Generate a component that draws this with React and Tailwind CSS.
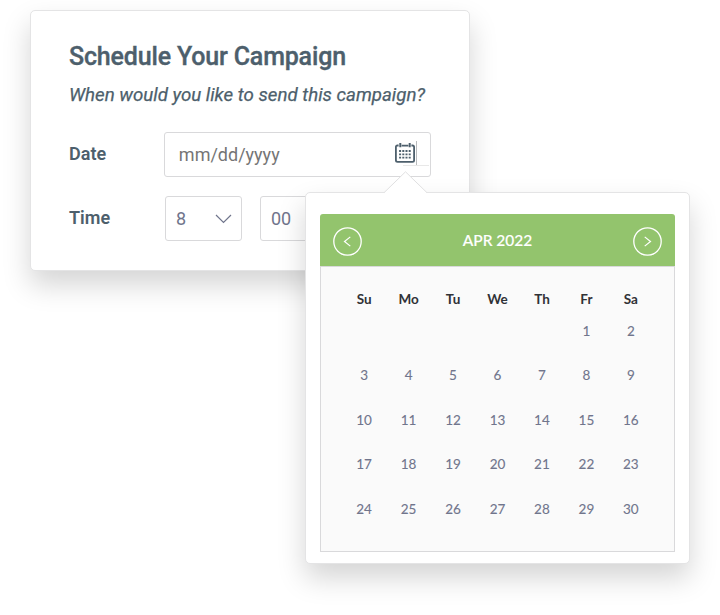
import React, { useMemo, useState } from "react";

const WEEKDAYS = ["Su", "Mo", "Tu", "We", "Th", "Fr", "Sa"];
const MONTHS = ["JAN", "FEB", "MAR", "APR", "MAY", "JUN", "JUL", "AUG", "SEP", "OCT", "NOV", "DEC"];

const pad = (n) => String(n).padStart(2, "0");

const CalendarIcon = () => (
  <svg width="20" height="20" viewBox="0 0 20 20" fill="none">
    <path
      d="M3.6 2.5H2.4Q.9 2.5 .9 4V17.3Q.9 18.9 2.5 18.9H17.5Q19.1 18.9 19.1 17.3V4Q19.1 2.5 17.6 2.5H16.4M6.6 2.7H13.4"
      stroke="#4d5f6c"
      strokeWidth="1.8"
    />
    <path d="M5.3 0V4.2M14.7 0V4.2" stroke="#4d5f6c" strokeWidth="2" />
    <path
      d="M4.1 8H16M4.1 11.3H16M4.1 14.6H16"
      stroke="#4d5f6c"
      strokeWidth="1.8"
      strokeDasharray="2 1.2"
    />
  </svg>
);

const NavButton = ({ label, onClick, d }) => (
  <button type="button" aria-label={label} onClick={onClick} className="mt-0.5 h-[29px] w-[29px]">
    <svg width="29" height="29" viewBox="0 0 29 29" fill="none" stroke="white">
      <circle cx="14.5" cy="14.5" r="13.7" strokeWidth="1.3" />
      <path d={d} strokeWidth="1.2" />
    </svg>
  </button>
);

const TimeField = ({ value }) => (
  <div className="flex h-[45px] w-[77.5px] items-center justify-between rounded-[3px] border border-[#d9d9db] pr-[9px] pl-[10.5px] text-lg text-[#70758c]">
    <span>{value}</span>
    <svg width="17" height="10" viewBox="0 0 17 10" fill="none" stroke="#70758c" strokeWidth="1.2">
      <path d="M1 1L8.5 8.5L16 1" />
    </svg>
  </div>
);

const DatePicker = ({ onPick }) => {
  const [view, setView] = useState({ year: 2022, month: 3 });

  const cells = useMemo(() => {
    const first = new Date(view.year, view.month, 1).getDay();
    const count = new Date(view.year, view.month + 1, 0).getDate();
    return [...Array(first).fill(null), ...Array.from({ length: count }, (_, i) => i + 1)];
  }, [view]);

  const move = (step) => {
    const d = new Date(view.year, view.month + step, 1);
    setView({ year: d.getFullYear(), month: d.getMonth() });
  };

  return (
    <div className="absolute top-[192px] left-[305px] h-[372px] w-[385px] rounded-[5px] border border-[#e4e4e5] bg-white px-[14.4px] pt-[21px] font-[Lato,sans-serif] shadow-[0_14px_28px_rgba(0,0,0,0.17)]">
      <svg className="absolute -top-[22px] left-[77px]" width="46" height="23" viewBox="0 0 46 23">
        <path d="M1 22L22.5 .8L44 22V23H1Z" fill="white" />
        <path d="M1 21.7L22.5 .8L44 21.7" fill="none" stroke="#e0e0e1" />
      </svg>

      <div className="flex h-[52px] items-center justify-between rounded-t-[3px] bg-[#93c46d] px-[12.8px]">
        <NavButton label="Previous month" onClick={() => move(-1)} d="M17.3 9.9L11.5 14.5L17.3 19.1" />
        <div className="pt-0.5 text-[15.5px] font-medium text-white [-webkit-text-stroke:0.15px_white]">
          {MONTHS[view.month]} {view.year}
        </div>
        <NavButton label="Next month" onClick={() => move(1)} d="M11.7 9.9L17.5 14.5L11.7 19.1" />
      </div>

      <div className="h-[286px] border border-[#d9d9db] bg-[#fafafa] px-[20.5px] pt-[21.5px]">
        <div className="grid grid-cols-7 text-center text-[13.5px] leading-5 font-bold text-[#303236]">
          {WEEKDAYS.map((d) => (
            <div key={d}>{d}</div>
          ))}
        </div>
        <div className="mt-[0.3px] grid auto-rows-[44.5px] grid-cols-7 text-center text-[13.5px] text-[#70758c] [-webkit-text-stroke:0.1px_#70758c]">
          {cells.map((day, i) =>
            day ? (
              <button
                key={i}
                type="button"
                onClick={() => onPick(`${pad(view.month + 1)}/${pad(day)}/${view.year}`)}
              >
                {day}
              </button>
            ) : (
              <span key={i} />
            )
          )}
        </div>
      </div>
    </div>
  );
};

const App = () => {
  const [date, setDate] = useState("");

  return (
    <div className="relative h-[615px] w-[720px] overflow-hidden bg-white pt-[10px] pl-[30px] font-[Roboto,sans-serif]">
      <div className="h-[261px] w-[440px] rounded-[5px] border border-[#e4e4e5] bg-white px-[38px] pt-[30px] text-[#4d5f6c] shadow-[0_14px_28px_rgba(0,0,0,0.17)]">
        <h1 className="text-[25px] leading-8 font-medium tracking-[-0.17px] [-webkit-text-stroke:0.35px_#4d5f6c]">
          Schedule Your Campaign
        </h1>
        <p className="mt-[10px] text-[18.7px] leading-6 whitespace-nowrap italic [-webkit-text-stroke:0.25px_#4d5f6c]">
          When would you like to send this campaign?
        </p>

        <div className="mt-[25px] flex items-center">
          <label className="mb-0.5 w-[95.5px] text-lg font-semibold">Date</label>
          <div className="flex h-[45px] w-[267px] items-center justify-between rounded-[3px] border border-[#d9d9db] pr-[13px] pl-[13.5px]">
            <input
              className="w-[180px] text-lg text-[#757575] outline-none placeholder:text-[#757575]"
              placeholder="mm/dd/yyyy"
              value={date}
              onChange={(e) => setDate(e.target.value)}
            />
            <div className="relative mb-1 flex items-center gap-px">
              <CalendarIcon />
              <span className="h-6 w-px bg-[#b9bbbd]" />
              <span className="absolute top-6 left-2 h-px w-[26px] bg-[#e8e8e8]" />
            </div>
          </div>
        </div>

        <div className="mt-[19px] flex items-center">
          <label className="mb-0.5 w-[95.5px] text-lg font-semibold">Time</label>
          <div className="flex gap-[17.5px]">
            <TimeField value="8" />
            <TimeField value="00" />
          </div>
        </div>
      </div>

      <DatePicker onPick={setDate} />
    </div>
  );
};

export default App;
